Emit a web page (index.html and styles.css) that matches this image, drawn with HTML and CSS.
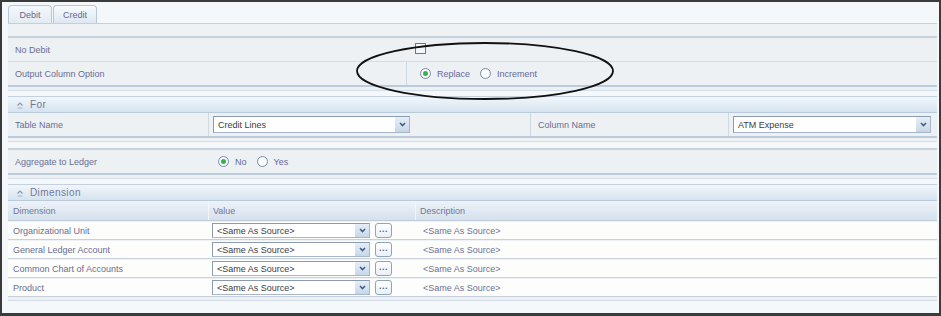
FILE: index.html
```html
<!DOCTYPE html>
<html>
<head>
<meta charset="utf-8">
<link rel="stylesheet" href="styles.css">
</head>
<body>
<div class="frame">
  <div class="tabs">
    <div class="tab active">Debit</div>
    <div class="tab">Credit</div>
  </div>
  <div class="tabband"></div>

  <div class="block">
    <div class="row">
      <div class="label w-opt">No Debit</div>
      <div class="field pad-check"><span class="check"></span></div>
    </div>
    <div class="row">
      <div class="label w-opt">Output Column Option</div>
      <div class="field sep pad-opt">
        <span class="radio on"></span><span class="rtext">Replace</span>
        <span class="radio gap-r"></span><span class="rtext">Increment</span>
      </div>
    </div>
  </div>
  <div class="strip"></div>

  <div class="phead">
    <svg class="hicon" width="8" height="8" viewBox="0 0 8 8"><path d="M1.5 4.5 L4 2 L6.5 4.5" fill="none" stroke="#8a97b0" stroke-width="1.2"/><path d="M1.5 7 H6.5" stroke="#aab4c6" stroke-width="1"/></svg>
    <span>For</span>
  </div>
  <div class="block block-tight">
    <div class="row">
      <div class="label w-dim">Table Name</div>
      <div class="field sep w-tbl pad-sel">
        <div class="select w197"><span class="txt">Credit Lines</span><span class="arrow"><svg width="7" height="5" viewBox="0 0 7 5"><path d="M1 1 L3.5 3.6 L6 1" fill="none" stroke="#3f5d86" stroke-width="1.5"/></svg></span></div>
      </div>
      <div class="label sep w-col">Column Name</div>
      <div class="field sep grow pad-sel2">
        <div class="select w198"><span class="txt">ATM Expense</span><span class="arrow"><svg width="7" height="5" viewBox="0 0 7 5"><path d="M1 1 L3.5 3.6 L6 1" fill="none" stroke="#3f5d86" stroke-width="1.5"/></svg></span></div>
      </div>
    </div>
  </div>
  <div class="strip strip-b"></div>

  <div class="block">
    <div class="row">
      <div class="label w-dim">Aggregate to Ledger</div>
      <div class="field pad-agg">
        <span class="radio on"></span><span class="rtext">No</span>
        <span class="radio gap-r"></span><span class="rtext">Yes</span>
      </div>
    </div>
  </div>
  <div class="strip"></div>

  <div class="phead">
    <svg class="hicon" width="8" height="8" viewBox="0 0 8 8"><path d="M1.5 4.5 L4 2 L6.5 4.5" fill="none" stroke="#8a97b0" stroke-width="1.2"/><path d="M1.5 7 H6.5" stroke="#aab4c6" stroke-width="1"/></svg>
    <span>Dimension</span>
  </div>
  <div class="thead">
    <div class="c-dim">Dimension</div>
    <div class="c-val hsep">Value</div>
    <div class="c-desc hsep">Description</div>
  </div>
  <div class="trow">
    <div class="c-dim">Organizational Unit</div>
    <div class="c-val vcell"><div class="select w158"><span class="txt">&lt;Same As Source&gt;</span><span class="arrow"><svg width="7" height="5" viewBox="0 0 7 5"><path d="M1 1 L3.5 3.6 L6 1" fill="none" stroke="#3f5d86" stroke-width="1.5"/></svg></span></div><span class="dots">...</span></div>
    <div class="c-desc">&lt;Same As Source&gt;</div>
  </div>
  <div class="trow">
    <div class="c-dim">General Ledger Account</div>
    <div class="c-val vcell"><div class="select w158"><span class="txt">&lt;Same As Source&gt;</span><span class="arrow"><svg width="7" height="5" viewBox="0 0 7 5"><path d="M1 1 L3.5 3.6 L6 1" fill="none" stroke="#3f5d86" stroke-width="1.5"/></svg></span></div><span class="dots">...</span></div>
    <div class="c-desc">&lt;Same As Source&gt;</div>
  </div>
  <div class="trow">
    <div class="c-dim">Common Chart of Accounts</div>
    <div class="c-val vcell"><div class="select w158"><span class="txt">&lt;Same As Source&gt;</span><span class="arrow"><svg width="7" height="5" viewBox="0 0 7 5"><path d="M1 1 L3.5 3.6 L6 1" fill="none" stroke="#3f5d86" stroke-width="1.5"/></svg></span></div><span class="dots">...</span></div>
    <div class="c-desc">&lt;Same As Source&gt;</div>
  </div>
  <div class="trow">
    <div class="c-dim">Product</div>
    <div class="c-val vcell"><div class="select w158"><span class="txt">&lt;Same As Source&gt;</span><span class="arrow"><svg width="7" height="5" viewBox="0 0 7 5"><path d="M1 1 L3.5 3.6 L6 1" fill="none" stroke="#3f5d86" stroke-width="1.5"/></svg></span></div><span class="dots">...</span></div>
    <div class="c-desc">&lt;Same As Source&gt;</div>
  </div>
  <div class="strip"></div>

  <svg class="annot" width="941" height="316" viewBox="0 0 941 316">
    <ellipse cx="485" cy="71" rx="128" ry="28" fill="none" stroke="#111" stroke-width="1.8"/>
  </svg>
</div>
</body>
</html>
```
FILE: styles.css
```css
html, body {
  margin: 0;
  padding: 0;
  background: #ffffff;
}
.frame {
  position: relative;
  width: 941px;
  height: 316px;
  box-sizing: border-box;
  border: 2px solid #3b3b3b;
  border-bottom-width: 3px;
  background: #f4f8fb;
  padding: 3px 2px 0 6px;
  font-family: "Liberation Sans", Arial, sans-serif;
  font-size: 9px;
  color: #6a6d92;
  overflow: hidden;
}
.tabs {
  display: flex;
  gap: 1px;
  height: 18px;
  border-bottom: 1px solid #c3d0dc;
}
.tab {
  width: 44px;
  box-sizing: border-box;
  border: 1px solid #b8c7d6;
  border-bottom: none;
  border-radius: 4px 4px 0 0;
  background: linear-gradient(#f8fbfd, #dde7f1);
  display: flex;
  align-items: center;
  justify-content: center;
  color: #666a90;
}
.tab.active {
  background: linear-gradient(#f4f8fc, #e3ebf3);
}
.tabband {
  height: 12px;
  background: #eef2f5;
}
.block {
  border-top: 2px solid #c6d3df;
  border-bottom: 2px solid #bccbd9;
  background: #edf1f4;
}
.block-tight {
  border-top: none;
}
.row {
  display: flex;
  height: 23px;
}
.row + .row {
  border-top: 1px solid #d4dde6;
}
.label {
  display: flex;
  align-items: center;
  box-sizing: border-box;
  padding-left: 7px;
}
.field {
  display: flex;
  align-items: center;
  box-sizing: border-box;
}
.sep {
  border-left: 1px solid #cfd9e3;
}
.grow { flex: 1; }
.w-opt { width: 398px; }
.w-dim { width: 200px; }
.w-tbl { width: 322px; }
.w-col { width: 198px; }
.pad-check { padding-left: 9px; padding-bottom: 3px; }
.pad-opt { padding-left: 13px; }
.pad-agg { padding-left: 10px; }
.pad-sel { padding-left: 4px; }
.pad-sel2 { padding-left: 4px; }
.check {
  width: 11px;
  height: 11px;
  box-sizing: border-box;
  border: 1.5px solid #5a78a0;
  background: #f3f6fa;
}
.radio {
  width: 11px;
  height: 11px;
  box-sizing: border-box;
  border-radius: 50%;
  border: 1px solid #7890ad;
  background: radial-gradient(#ffffff 45%, #d9e3ee);
  display: inline-flex;
  align-items: center;
  justify-content: center;
}
.radio.on::after {
  content: "";
  width: 5px;
  height: 5px;
  border-radius: 50%;
  background: #3dae4b;
}
.rtext {
  margin-left: 6px;
  color: #66699a;
}
.gap-r { margin-left: 10px; }
.strip {
  height: 3px;
  background: #edf1f4;
  border-bottom: 1px solid #d5dee7;
  margin-bottom: 5px;
}
.strip-b { margin-bottom: 6px; }
.phead {
  display: flex;
  align-items: center;
  gap: 6px;
  height: 15px;
  padding-left: 8px;
  border-top: 1px solid #c4d2df;
  border-bottom: 1px solid #b9cadb;
  background: linear-gradient(#f2f6fb, #d6e3ef);
  font-size: 10px;
  letter-spacing: 0.4px;
  color: #727899;
}
.hicon { display: block; }
.select {
  display: flex;
  align-items: center;
  height: 16px;
  box-sizing: border-box;
  border: 1px solid #a8b7c7;
  border-top-color: #8b9cb0;
  border-left-color: #8b9cb0;
  background: #ffffff;
  color: #3c3c44;
}
.select .txt {
  flex: 1;
  padding-left: 4px;
  white-space: nowrap;
}
.select .arrow {
  width: 14px;
  height: 100%;
  display: flex;
  align-items: center;
  justify-content: center;
  background: linear-gradient(#e6eef7, #c7d7e9);
}
.w197 { width: 197px; height: 17px; }
.w198 { width: 198px; height: 17px; }
.w158 { width: 158px; height: 15px; }
.thead {
  display: flex;
  height: 19px;
  border-bottom: 1px solid #bfcedc;
  background: linear-gradient(#eef3f8, #d5e1ed);
  color: #72769a;
}
.thead > div {
  display: flex;
  align-items: center;
}
.c-dim {
  width: 200px;
  box-sizing: border-box;
  padding-left: 5px;
}
.c-val {
  width: 207px;
  box-sizing: border-box;
  padding-left: 4px;
}
.c-desc {
  flex: 1;
  box-sizing: border-box;
  padding-left: 4px;
}
.hsep { border-left: 1px solid #f2f6fa; }
.trow {
  display: flex;
  align-items: center;
  height: 19px;
  box-sizing: border-box;
  border-top: 1px solid #eef1f5;
  border-bottom: 1px solid #c7d0dc;
  background: #fdfdfb;
}
.trow .c-desc {
  padding-left: 8px;
  color: #6e7196;
}
.vcell {
  display: flex;
  align-items: center;
}
.dots {
  width: 17px;
  height: 15px;
  box-sizing: border-box;
  margin-left: 5px;
  border: 1px solid #8ea4bd;
  border-radius: 3px;
  background: linear-gradient(#ffffff, #eaf0f6);
  color: #4a6a9a;
  font-size: 9px;
  font-weight: bold;
  letter-spacing: 0.5px;
  display: flex;
  align-items: center;
  justify-content: center;
  line-height: 1;
  padding-bottom: 2px;
}
.annot {
  position: absolute;
  left: -2px;
  top: -2px;
  pointer-events: none;
}
```
